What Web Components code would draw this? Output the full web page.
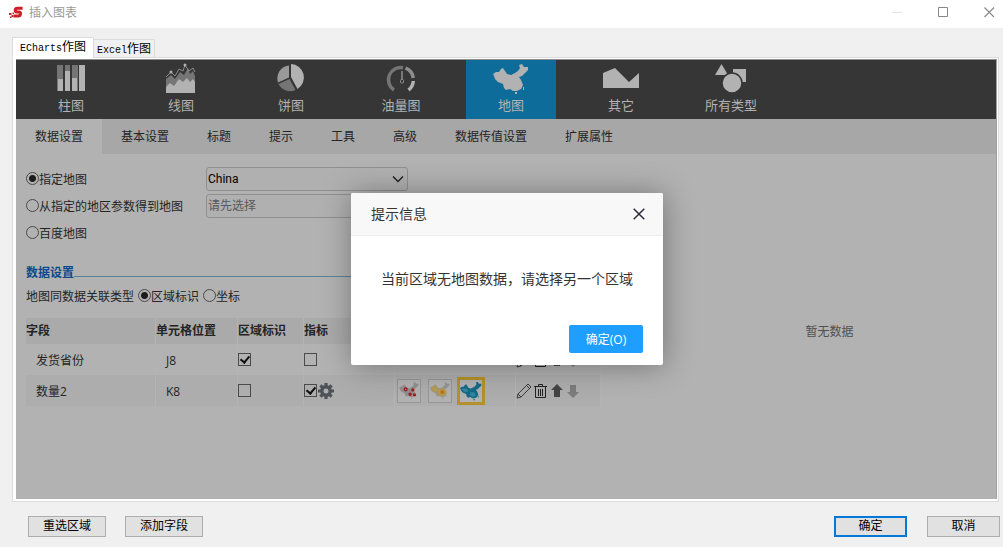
<!DOCTYPE html>
<html lang="zh-CN">
<head>
<meta charset="utf-8">
<title>插入图表</title>
<style>
  html { height: 100%; }
  body {
    margin: 0;
    min-height: 100%;
    display: flex;
    font: 12px/16px "Open Sans", "Noto Sans CJK SC", sans-serif;
    color: #242424;
    background: #f0f0f0;
  }
</style>
</head>
<body>
<app-window caption="插入图表">
  <chart-tabs>
    <chart-toolbar></chart-toolbar>
    <sub-nav></sub-nav>
    <split-view>
      <map-settings slot="main"></map-settings>
      <field-table slot="main"></field-table>
      <empty-preview slot="side">暂无数据</empty-preview>
    </split-view>
    <message-dialog slot="overlay" caption="提示信息" action="确定(O)">当前区域无地图数据，请选择另一个区域</message-dialog>
  </chart-tabs>
  <push-button slot="left">重选区域</push-button>
  <push-button slot="left">添加字段</push-button>
  <push-button slot="right" class="primary">确定</push-button>
  <push-button slot="right">取消</push-button>
</app-window>

<script>
const CHINA = 'M0 10 L3 8 L6 8 L8 5 L10 4 L12 7 L14 10 L18 11 L22 9 L25 7 L27 4 L26 1 L29 0 L31 3 L35 3 L35 6 L32 9 L29 12 L26 13 L28 16 L30 21 L28 25 L24 27 L20 27 L17 25 L13 26 L11 24 L10 20 L5 18 L2 15 L1 12 Z M22 28h2v2h-2z M30 23h1v3h-1z';

function define(name, html, setup) {
  const template = document.createElement('template');
  template.innerHTML = html;
  customElements.define(name, class extends HTMLElement {
    connectedCallback() {
      if (this.shadowRoot) return;
      this.attachShadow({ mode: 'open' }).append(template.content.cloneNode(true));
      if (setup) setup(this, this.shadowRoot);
    }
  });
}

/* Window frame: caption bar, content, footer buttons */
define('app-window', `
<style>
  :host { display: flex; flex-direction: column; flex: 1; min-width: 0; }
  header { display: flex; align-items: center; height: 28px; padding: 0 8px 3px 9px; box-sizing: border-box; background: #fff; color: #999; }
  .logo { width: 14px; height: 13px; margin-right: 6px; }
  h1 { margin: 0; font-size: 12px; font-weight: 400; flex: 1; }
  .controls { display: flex; gap: 35px; }
  .controls button { border: 0; padding: 0; background: none; width: 11px; height: 11px; display: block; }
  .controls svg { display: block; }
  main { flex: 1; display: flex; flex-direction: column; padding: 9px 4px 0 12px; }
  footer { display: flex; justify-content: space-between; padding: 14px 3px 10px 28px; }
  footer div { display: flex; gap: 19px; }
  footer div + div { gap: 20px; }
</style>
<header>
  <svg class="logo" viewBox="0 0 14 13" aria-hidden="true">
    <path d="M13.600 2.200H8.500Q6.300 2.200 6.200 4T8 6H9.800Q11.800 6 11.500 8T9 9.900H4.500" fill="none" stroke="#cc1f26" stroke-width="3"/>
    <path d="M0 7h2.500v2H0z M2.500 9h2v2h-2z M1 10.500h1.500V12H1z M3.500 6.500h1.500V8H3.500z" fill="#cc1f26"/>
  </svg>
  <h1></h1>
  <div class="controls">
    <button aria-label="最小化"><svg width="11" height="11"><path d="M0 5.500h10" stroke="#e4e4e4"/></svg></button>
    <button aria-label="最大化"><svg width="11" height="11"><path d="M.5.5h9v9h-9z" fill="none" stroke="#888"/></svg></button>
    <button aria-label="关闭"><svg width="11" height="11"><path d="M.5.5l9.500 9.500M10 .5L.5 10" stroke="#888" stroke-width="1.100"/></svg></button>
  </div>
</header>
<main><slot></slot></main>
<footer><div><slot name="left"></slot></div><div><slot name="right"></slot></div></footer>
`, (host, root) => { root.querySelector('h1').textContent = host.getAttribute('caption'); });

define('push-button', `
<style>
  :host { display: block; }
  button { display: block; min-width: 78px; height: 21px; padding: 0 10px 2px; border: 1px solid #adadad; background: #e1e1e1; color: #000; font: inherit; line-height: 16px; box-sizing: border-box; }
  :host([slot="right"]) button { min-width: 73px; }
  :host(.primary) button { border: 2px solid #0078d7; }
</style>
<button type="button"><slot></slot></button>`);

define('chart-tabs', `
<style>
  :host { display: flex; flex-direction: column; flex: 1; }
  .tabs { display: flex; align-items: flex-end; position: relative; margin-bottom: -1px; }
  .tabs button { font: inherit; color: #000; border: 1px solid #dcdcdc; background: #f0f0f0; padding: 0 3px; height: 19px; line-height: 17px; margin-left: -1px; }
  .tabs .on { background: #fff; border-bottom-color: #fff; height: 21px; padding: 0 7px 2px; margin-left: 0; }
  .latin { font: 10px/16px "Liberation Mono", monospace; }
  .frame { flex: 1; display: flex; border: 1px solid #dcdcdc; background: #fff; padding: 1px 1px 2px 3px; }
  .page { flex: 1; position: relative; display: flex; flex-direction: column; background: #b2b2b2; border-top: 1px solid #8e8e8e; border-right: 1px solid #a0a0a0; min-width: 0; }
  .overlay { position: absolute; inset: 0; display: flex; align-items: center; justify-content: center; overflow: hidden; padding: 0 0 1px 2px; }
</style>
<div class="tabs" role="tablist">
  <button class="on" role="tab" aria-selected="true"><span class="latin">ECharts</span>作图</button>
  <button role="tab" aria-selected="false"><span class="latin">Excel</span>作图</button>
</div>
<div class="frame"><div class="page"><slot></slot><div class="overlay"><slot name="overlay"></slot></div></div></div>`);

define('chart-toolbar', `
<style>
  :host { display: flex; gap: 20px; padding: 0 10px; background: #363636; }
</style>
<chart-type label="柱图"><svg viewBox="0 0 40 32" width="40" height="32">
  <path fill="#757575" d="M6 2h6v26H6zM14 2h5v26h-5zM21 2h6v26h-6z"/>
  <path fill="#b2b2b2" d="M7 16h5v12H7zM14 8h5v20h-5zM21 15h5v13h-5zM28 2h6v26h-6z"/></svg></chart-type>
<chart-type label="线图"><svg viewBox="0 0 40 32" width="40" height="32">
  <path fill="#757575" d="M5 16l5-4 4 4 5-7 4 3 4-7 2 6 3-3 2 5v15H5z"/>
  <path fill="#b2b2b2" d="M5 24l4-4 4 3 5-7 4 3 4-4 3 4 3-3 2 3v11H5z"/>
  <path fill="none" stroke="#8c8c8c" d="M5 14l5-5 4 4 4-7 4 2 2-6 4 6 4-3 2 4"/>
  <circle cx="10" cy="9" r="1.500" fill="#b2b2b2"/><circle cx="24" cy="2" r="1.500" fill="#b2b2b2"/></svg></chart-type>
<chart-type label="饼图"><svg viewBox="0 0 40 32" width="40" height="32">
  <path fill="#b2b2b2" d="M20 1a13.500 13.500 0 0 1 6.500 25L20 14z"/>
  <path fill="#999" d="M18 2.500V14.500L7 19.500A13 13 0 0 1 18 2.500z"/>
  <path fill="#757575" d="M18.500 16L24.500 27A13 13 0 0 1 7.500 21z"/></svg></chart-type>
<chart-type label="油量图"><svg viewBox="0 0 40 32" width="40" height="32" fill="none" stroke-width="3.500">
  <path stroke="#757575" d="M13 27A12.200 12.200 0 0 1 22 4.800"/>
  <path stroke="#8e8e8e" d="M24.500 5.200A12.200 12.200 0 0 1 32.300 15"/>
  <path stroke="#b2b2b2" d="M32.300 18A12.200 12.200 0 0 1 27.500 27"/>
  <path stroke="#8e8e8e" stroke-width="1.500" d="M21 8v9"/><rect x="19.500" y="16.500" width="3" height="3.500" rx="1" stroke="#8e8e8e" stroke-width="1"/></svg></chart-type>
<chart-type label="地图" class="on"><svg viewBox="-2 -1 40 32" width="40" height="32"><path fill="#b2b2b2" d="${CHINA}"/></svg></chart-type>
<chart-type label="其它"><svg viewBox="0 0 40 32" width="40" height="32"><path fill="#b2b2b2" d="M2 10l12-5 14 14 10-9v15H2z"/></svg></chart-type>
<chart-type label="所有类型"><svg viewBox="0 0 40 32" width="40" height="32">
  <path fill="#b2b2b2" d="M10.500 1L17 12H4z M22 6h13v13H22z"/><circle cx="21" cy="20" r="10" fill="#b2b2b2" stroke="#363636" stroke-width="1.500"/></svg></chart-type>`);

define('chart-type', `
<style>
  :host { display: block; width: 90px; }
  button { display: flex; flex-direction: column; align-items: center; width: 100%; height: 59px; padding: 3px 0 4px; border: 0; background: none; color: #b2b2b2; font: inherit; font-size: 13px; line-height: 20px; }
  :host(.on) button { background: #0d6c99; }
</style>
<button type="button"><slot></slot><span></span></button>`,
(host, root) => { root.querySelector('span').textContent = host.getAttribute('label'); });

define('sub-nav', `
<style>
  :host { display: block; background: #a7a7a7; }
  nav { display: flex; }
  a { color: #242424; text-decoration: none; padding: 0 19px; line-height: 35px; height: 35px; }
  a.on { background: #b2b2b2; }
</style>
<nav><a class="on" href="#data">数据设置</a><a href="#basic">基本设置</a><a href="#title">标题</a><a href="#tip">提示</a><a href="#tools">工具</a><a href="#advanced">高级</a><a href="#passing">数据传值设置</a><a href="#ext">扩展属性</a></nav>`);

define('split-view', `
<style>
  :host { display: grid; grid-template-columns: 1fr 34%; flex: 1; }
  .main { padding: 13px 0 10px 10px; min-width: 0; }
  .side { display: flex; align-items: center; justify-content: center; padding-top: 10px; }
</style>
<div class="main"><slot name="main"></slot></div><div class="side"><slot name="side"></slot></div>`);

define('empty-preview', `<style>:host { display: block; color: #505050; }</style><slot></slot>`);

const INPUTS = `
  input { appearance: none; margin: 0; width: 13px; height: 13px; box-sizing: border-box; border: 1px solid #4a4a4a; flex: none; }
  input[type=radio] { border-radius: 50%; margin-bottom: 3px; }
  input[type=radio]:checked { background: radial-gradient(circle, #1c1c1c 3px, transparent 4px); }
`;

define('map-settings', `
<style>
  ${INPUTS}
  :host { display: block; }
  label { display: flex; align-items: center; }
  .source { display: grid; grid-template-columns: 180px 202px; row-gap: 3px; }
  .source label { height: 24px; padding-top: 1px; box-sizing: border-box; }
  .pick { display: grid; }
  .pick > * { grid-area: 1 / 1; }
  select { appearance: none; font: inherit; font-family: Roboto, "Noto Sans CJK SC", sans-serif; width: 100%; height: 24px; padding: 0 1px; border: 1px solid #8f8f8f; border-radius: 3px; background: #b0b0b0; color: #000; opacity: 1; }
  select:disabled { color: #595959; }
  .pick svg { justify-self: end; align-self: center; margin-right: 4px; pointer-events: none; }
  h2 { display: flex; align-items: flex-end; margin: 20px 10px 0 0; height: 16px; font-size: 12px; line-height: 16px; color: #0b4a8c; }
  h2::after { content: ""; flex: 1; height: 1px; background: #5d8096; margin-bottom: 4px; }
  .relation { display: flex; align-items: center; gap: 4px; height: 20px; margin-top: 6px; }
</style>
<div class="source">
  <label><input type="radio" name="source" checked>指定地图</label>
  <div class="pick"><select aria-label="指定地图"><option>China</option></select>
    <svg width="12" height="8" viewBox="0 0 12 8"><path d="M1 1.500l5 5 5-5" fill="none" stroke="#222" stroke-width="1.500"/></svg></div>
  <label><input type="radio" name="source">从指定的地区参数得到地图</label>
  <div class="pick"><select aria-label="地区参数" disabled><option>请先选择</option></select></div>
  <label><input type="radio" name="source">百度地图</label>
</div>
<h2>数据设置</h2>
<div class="relation"><span>地图同数据关联类型</span>
  <label><input type="radio" name="relation" checked>区域标识</label>
  <label><input type="radio" name="relation">坐标</label>
</div>`);

const ACTIONS = () => `
  <span class="icons">
    <button aria-label="编辑"><svg width="16" height="16" viewBox="0 0 16 16" fill="none" stroke="#3c3c3c"><path d="M1 15l1-4L12 1l3 3L5 14zM10.500 2.500l3 3M2 11l3 3"/></svg></button>
    <button aria-label="删除"><svg width="14" height="16" viewBox="0 0 14 16" fill="none" stroke="#222"><path d="M0 3.500h13M4.500 3V1.500h4V3M1.500 4v10.500h10V4M4.500 6v7M6.500 6v7M8.500 6v7"/></svg></button>
    <button aria-label="上移"><svg width="14" height="16" viewBox="0 0 14 16"><path d="M7 1l6 6H10v7H4V7H1z" fill="#444"/></svg></button>
    <button aria-label="下移"><svg width="14" height="16" viewBox="0 0 14 16"><path d="M7 15l6-6H10V2H4v7H1z" fill="#7c7c7c"/></svg></button>
  </span>`;

define('field-table', `
<style>
  ${INPUTS}
  :host { display: block; margin-top: 11px; }
  table { border-collapse: separate; border-spacing: 0; table-layout: fixed; width: 575px; }
  th, td { padding: 0; text-align: left; border-right: 1px solid #b4b4b4; }
  th { height: 26px; background: #aaa; }
  td { height: 30px; }
  tr.alt td { background: #adadad; }
  td.text { padding: 3px 0 0 10px; height: 28px; }
  td input { display: block; }
  input[type=checkbox]:checked { display: grid; }
  input[type=checkbox]:checked::before { content: ""; width: 4px; height: 7px; margin: 0 0 0 3px; border: solid #111; border-width: 0 2px 2px 0; transform: rotate(40deg); }
  .metric { display: flex; align-items: center; gap: 1px; }
  .styles { display: flex; align-items: center; gap: 7px; padding-left: 2px; }
  button { border: 0; padding: 0; background: none; display: block; }
  button svg { display: block; }
  .thumb { border: 1px solid #969696; background: #b2b2b2; width: 24px; height: 24px; }
  .thumb.on { border: 3px solid #b3922c; width: 28px; height: 28px; margin-left: -2px; }
  .icons { display: flex; align-items: center; gap: 2px; }
</style>
<table>
  <colgroup><col width="130"><col width="82"><col width="66"><col width="91"><col width="121"><col width="85"></colgroup>
  <thead><tr><th>字段</th><th>单元格位置</th><th>区域标识</th><th>指标</th><th></th><th></th></tr></thead>
  <tbody>
    <tr><td class="text">发货省份</td><td class="text">J8</td>
      <td><input type="checkbox" checked aria-label="发货省份 区域标识"></td>
      <td><input type="checkbox" aria-label="发货省份 指标"></td><td></td><td>${ACTIONS()}</td></tr>
    <tr class="alt"><td class="text">数量2</td><td class="text">K8</td>
      <td><input type="checkbox" aria-label="数量2 区域标识"></td>
      <td><span class="metric"><input type="checkbox" checked aria-label="数量2 指标">
        <button aria-label="设置"><svg width="16" height="16" viewBox="-8 -8 16 16"><circle r="4.200" fill="none" stroke="#4c5257" stroke-width="3.400"/><path stroke="#4c5257" stroke-width="3.200" d="M0-8v3M0 8v-3M-8 0h3M8 0h-3M-5.600-5.600l2 2M5.600 5.600l-2-2M-5.600 5.600l2-2M5.600-5.600l-2 2"/></svg></button></span></td>
      <td><span class="styles">
        <button class="thumb" aria-label="标记点地图"><svg width="22" height="22" viewBox="-2 -4 40 40"><path fill="#8f8f8f" d="${CHINA}"/><g fill="#b2b2b2" stroke="#a01c22" stroke-width="2.600"><circle cx="12" cy="13" r="2.500"/><circle cx="25" cy="14" r="1.700"/><circle cx="20" cy="22" r="1.800"/><circle cx="28" cy="23" r="1.700"/></g></svg></button>
        <button class="thumb" aria-label="热力地图"><svg width="22" height="22" viewBox="-2 -4 40 40"><path fill="#959595" d="${CHINA}"/><ellipse cx="8" cy="12" rx="5" ry="6" fill="#b39b58"/><ellipse cx="21" cy="18" rx="9" ry="7" fill="#b89a45"/><circle cx="22" cy="18" r="3.500" fill="#b9702c"/></svg></button>
        <button class="thumb on" aria-label="区域地图"><svg width="22" height="22" viewBox="0 -2 36 34"><path fill="#146a86" d="${CHINA}"/><path fill="#3485a0" d="M3 11h8l3 4-5 2-5-3zM17 17h6l3 5-5 3-5-4z"/></svg></button>
      </span></td>
      <td>${ACTIONS()}</td></tr>
  </tbody>
</table>`);

define('message-dialog', `
<style>
  :host { display: block; background: #fff; border-radius: 2px; box-shadow: 1px 1px 30px rgba(0,0,0,.35); color: #333; font-size: 14px; }
  header { display: flex; align-items: center; justify-content: space-between; height: 42px; padding: 0 18px 0 20px; background: #f8f8f8; border-bottom: 1px solid #eee; border-radius: 2px 2px 0 0; }
  h2 { margin: 0; font-size: 14px; font-weight: 400; line-height: 20px; }
  header button { border: 0; padding: 0; background: none; }
  header svg { display: block; }
  p { margin: 0; padding: 33px 30px 36px; line-height: 20px; }
  footer { display: flex; justify-content: flex-end; padding: 0 20px 12px; }
  footer button { border: 0; border-radius: 2px; background: #1e9fff; color: #fff; width: 74px; height: 28px; font: inherit; font-size: 12px; padding: 2px 0 0; }
</style>
<div role="dialog" aria-labelledby="t">
  <header><h2 id="t"></h2><button aria-label="关闭"><svg width="12" height="12"><path d="M.7.7l10.600 10.600M11.300.7L.7 11.300" stroke="#2e2d3c" stroke-width="1.500"/></svg></button></header>
  <p><slot></slot></p>
  <footer><button type="button" class="ok"></button></footer>
</div>`, (host, root) => {
  root.querySelector('h2').textContent = host.getAttribute('caption');
  root.querySelector('.ok').textContent = host.getAttribute('action');
});
</script>
</body>
</html>
